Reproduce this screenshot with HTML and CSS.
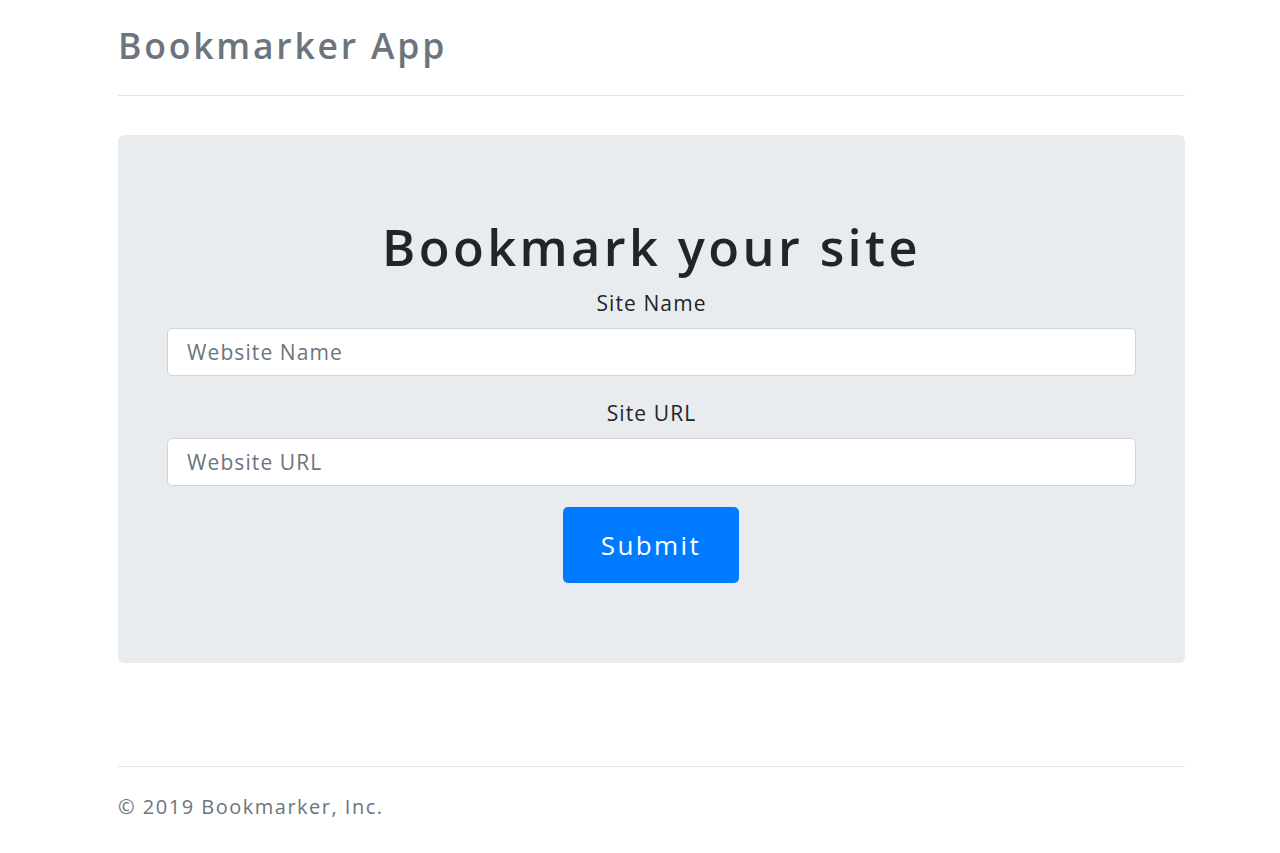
FILE: index.html
```html
<!DOCTYPE html>
<html lang="en">
<head>
<meta charset="utf-8">
<title>Bookmarker App</title>
<link rel="stylesheet" href="styles.css">
</head>
<body>
<div class="container">
  <header class="header">
    <h3 class="brand">Bookmarker App</h3>
  </header>
  <main class="jumbotron">
    <h1 class="title">Bookmark your site</h1>
    <form class="form">
      <label class="label" for="siteName">Site Name</label>
      <input class="input" id="siteName" type="text" placeholder="Website Name">
      <label class="label label-second" for="siteUrl">Site URL</label>
      <input class="input" id="siteUrl" type="text" placeholder="Website URL">
      <button class="btn" type="button">Submit</button>
    </form>
  </main>
  <footer class="footer">
    <p class="copy">&copy; 2019 Bookmarker, Inc.</p>
  </footer>
</div>
</body>
</html>
```
FILE: styles.css
```css
* { box-sizing: border-box; }
html, body { margin: 0; padding: 0; background: #fff; }
body {
  font-family: "Open Sans", "Noto Sans", sans-serif;
  color: #212529;
}
.container {
  width: 1067px;
  margin-left: 118px;
}
.header {
  height: 96px;
  border-bottom: 1px solid #e5e5e5;
  padding-top: 20px;
}
.brand {
  margin: 0;
  font-size: 35.5px;
  line-height: 50px;
  font-weight: 600;
  letter-spacing: 2.8px;
  color: #6c757d;
}
.jumbotron {
  margin-top: 39px;
  height: 528px;
  background: #e9ecef;
  border-radius: 6px;
  padding: 78px 49px 0;
}
.title {
  margin: 0;
  text-align: center;
  font-size: 50.5px;
  line-height: 67px;
  font-weight: 600;
  letter-spacing: 3.4px;
  color: #212529;
}
.form {
  display: flex;
  flex-direction: column;
  align-items: center;
  margin-top: 8px;
}
.label {
  font-size: 21px;
  line-height: 30px;
  letter-spacing: 1.1px;
  color: #212529;
  margin-bottom: 10px;
}
.label-second { margin-top: 22px; }
.input {
  width: 100%;
  height: 48px;
  border: 1px solid #ced4da;
  border-radius: 5px;
  background: #fff;
  padding: 0 19px;
  font-family: inherit;
  font-size: 21px;
  letter-spacing: 1.1px;
  color: #495057;
  outline: none;
}
.input::placeholder { color: #6c757d; opacity: 1; }
.btn {
  margin-top: 21px;
  margin-left: -1px;
  width: 176px;
  height: 76px;
  border: none;
  border-radius: 5px;
  background: #007bff;
  color: #fff;
  font-family: inherit;
  font-size: 26px;
  letter-spacing: 2.4px;
  cursor: pointer;
}
.footer {
  margin-top: 103px;
  border-top: 1px solid #e5e5e5;
  padding-top: 25px;
}
.copy {
  margin: 0;
  font-size: 20px;
  line-height: 30px;
  letter-spacing: 1.5px;
  color: #6c757d;
}
```
